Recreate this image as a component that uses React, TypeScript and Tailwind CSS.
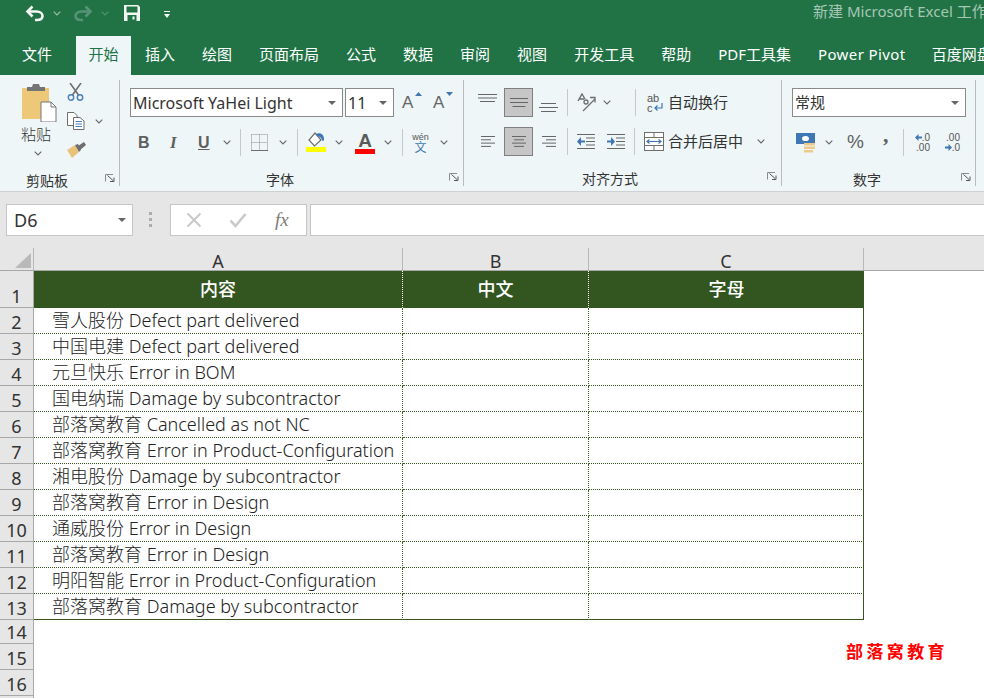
import React from "react";

const FONT = "font-['Noto_Sans','Noto_Sans_CJK_SC',sans-serif]";

function Chev({ className = "", color = "#666666" }: { className?: string; color?: string }) {
  return (
    <svg width="8" height="5" viewBox="0 0 8 5" className={"shrink-0 " + className}>
      <path d="M0.7 0.7 L4 4 L7.3 0.7" fill="none" stroke={color} strokeWidth="1.1" />
    </svg>
  );
}
function Tri({ className = "" }: { className?: string }) {
  return (
    <svg width="8" height="4" viewBox="0 0 8 4" className={"shrink-0 " + className}>
      <path d="M0 0 H8 L4 4 Z" fill="#666666" />
    </svg>
  );
}
function Launcher() {
  return (
    <svg width="10" height="8" viewBox="0 0 10 8" className="shrink-0">
      <path d="M0.5 7.5 V0.5 H8" fill="none" stroke="#8a8a8a" strokeWidth="1" />
      <path d="M2.5 1.5 L8 6.5 M9 3.5 V7.5 H5" fill="none" stroke="#555555" strokeWidth="1" />
    </svg>
  );
}
function VSep({ className = "" }: { className?: string }) {
  return <div className={"w-px h-[27px] bg-[#c6c9ca] shrink-0 " + className} />;
}
function Lines({ w, gap, widths, className = "" }: { w: number; gap: number; widths: number[]; className?: string }) {
  return (
    <svg width={w} height={(widths.length - 1) * gap + 1} className={"shrink-0 " + className}>
      {widths.map((lw, i) => (
        <rect key={i} x={(w - lw) / 2} y={i * gap} width={lw} height="1" fill="#666666" />
      ))}
    </svg>
  );
}
function LinesAligned({ align, className = "" }: { align: "l" | "c" | "r"; className?: string }) {
  const widths = [14, 10, 14, 10];
  return (
    <svg width="14" height="11" className={"shrink-0 " + className}>
      {widths.map((lw, i) => (
        <rect key={i} x={align === "l" ? 0 : align === "r" ? 14 - lw : (14 - lw) / 2} y={i * 3.3} width={lw} height="1" fill="#666666" />
      ))}
    </svg>
  );
}

function Undo() {
  return (
    <svg width="20" height="17" viewBox="0 0 20 17" className="shrink-0">
      <path d="M3 6.5 H11.5 C15 6.5 17.5 8.5 17.5 11 C17.5 13.8 15 15 12 15 H10" fill="none" stroke="#f4f8f5" strokeWidth="2.6" />
      <path d="M7.5 1.5 L2.5 6.5 L7.5 11.5" fill="none" stroke="#f4f8f5" strokeWidth="2.6" />
    </svg>
  );
}
function Redo() {
  return (
    <svg width="20" height="17" viewBox="0 0 20 17" className="shrink-0">
      <path d="M17 6.5 H8.5 C5 6.5 2.5 8.5 2.5 11 C2.5 13.8 5 15 8 15 H10" fill="none" stroke="#569377" strokeWidth="2.6" />
      <path d="M12.5 1.5 L17.5 6.5 L12.5 11.5" fill="none" stroke="#569377" strokeWidth="2.6" />
    </svg>
  );
}
function Save() {
  return (
    <svg width="16" height="16" viewBox="0 0 16 16" className="shrink-0">
      <path d="M0 0 H14 L16 2 V16 H0 Z" fill="#f4f8f5" />
      <rect x="2.5" y="1.5" width="11" height="6" fill="#217346" />
      <rect x="3.5" y="10" width="9" height="6" fill="#217346" />
      <rect x="8.5" y="11.5" width="2" height="3" fill="#f4f8f5" />
    </svg>
  );
}
function Customize() {
  return (
    <svg width="6" height="8" viewBox="0 0 6 8" className="shrink-0">
      <rect x="0" y="0" width="6" height="1" fill="#f4f8f5" />
      <path d="M0 3 H6 L3 7 Z" fill="#f4f8f5" />
    </svg>
  );
}
function Paste() {
  return (
    <svg width="35" height="38" viewBox="0 0 35 38" className="shrink-0">
      <path d="M0 4 H27 V35 H0 Z" fill="#ecc878" />
      <path d="M5 7 V3 H10 L11 0 H17 L18 3 H23 V7 Z" fill="#757575" />
      <path d="M19 18 H29 L34 23 V38 H19 Z" fill="#ffffff" stroke="#777777" strokeWidth="1" />
      <path d="M29 18 V23 H34" fill="none" stroke="#777777" strokeWidth="1" />
    </svg>
  );
}
function Scissors() {
  return (
    <svg width="17" height="18" viewBox="0 0 17 18" className="shrink-0">
      <path d="M3 0 L11.5 12 M14 0 L5.5 12" stroke="#6f6f6f" strokeWidth="1.6" fill="none" />
      <circle cx="4" cy="14.5" r="2.7" fill="none" stroke="#4a7fb8" strokeWidth="1.4" />
      <circle cx="13" cy="14.5" r="2.7" fill="none" stroke="#4a7fb8" strokeWidth="1.4" />
    </svg>
  );
}
function CopyIcon() {
  return (
    <svg width="18" height="18" viewBox="0 0 18 18" className="shrink-0">
      <path d="M0.5 0.5 H7 L10 3.5 V13.5 H0.5 Z" fill="#ffffff" stroke="#6e6e6e" />
      <path d="M6.5 5.5 H13 L17 9 V17.5 H6.5 Z" fill="#ffffff" stroke="#6e6e6e" />
      <path d="M8.5 9.5 H15 M8.5 12 H15 M8.5 14.5 H15" stroke="#4a7fb8" strokeWidth="1" />
    </svg>
  );
}
function Painter() {
  return (
    <svg width="19" height="16" viewBox="0 0 19 16" className="shrink-0">
      <path d="M0 8 L8 3 L12 10 L5 16 Z" fill="#e9c27a" />
      <path d="M8 3 L12 10 L14 8 L11 2 Z" fill="#6e6e6e" />
      <path d="M11 4 L17 0 L19 3 L13 8 Z" fill="#6e6e6e" />
    </svg>
  );
}
function Borders() {
  return (
    <svg width="17" height="17" viewBox="0 0 17 17" className="shrink-0">
      <path d="M0.5 0.5 H16.5 V16.5 M0.5 0.5 V16.5 M0.5 8.5 H16.5 M8.5 0.5 V16.5" fill="none" stroke="#8c8c8c" strokeWidth="1" strokeDasharray="1 1" />
      <rect x="0" y="16" width="17" height="1" fill="#6e6e6e" />
    </svg>
  );
}
function Fill() {
  return (
    <svg width="20" height="20" viewBox="0 0 20 20" className="shrink-0">
      <path d="M9 1 L15 8 L8.5 14 L3 8 Z" fill="#ffffff" stroke="#6e6e6e" strokeWidth="1.2" />
      <path d="M10 2 C15 0 18 3 18 7 C18 9 17 10 16 8 C15 5 13 4 11 4 Z" fill="#3f76b4" />
      <rect x="0" y="15" width="20" height="5" fill="#ffff00" />
    </svg>
  );
}
function Orientation() {
  return (
    <svg width="19" height="19" viewBox="0 0 19 19" className="shrink-0">
      <path d="M6 18 L18 6" stroke="#6e6e6e" strokeWidth="1.3" fill="none" />
      <path d="M13 4.5 H18 V9.5" stroke="#6e6e6e" strokeWidth="1.3" fill="none" />
      <path d="M1 8 L5 1 L8 6 M2.5 6 L7 6" stroke="#6e6e6e" strokeWidth="1.4" fill="none" />
      <circle cx="9" cy="9" r="2" fill="none" stroke="#6e6e6e" strokeWidth="1.3" />
    </svg>
  );
}
function Indent({ flip = false }: { flip?: boolean }) {
  return (
    <svg width="18" height="15" viewBox="0 0 18 15" className="shrink-0">
      <rect x="0" y="0" width="18" height="1" fill="#666666" />
      <rect x="0" y="14" width="18" height="1" fill="#666666" />
      {[3.5, 7, 10.5].map((y) => (
        <rect key={y} x="9" y={y} width="9" height="1" fill="#666666" />
      ))}
      {flip ? (
        <path d="M0 6.5 H4 V3 L8 7.5 L4 12 V8.5 H0 Z" fill="#3f76b4" />
      ) : (
        <path d="M8 6.5 H4 V3 L0 7.5 L4 12 V8.5 H8 Z" fill="#3f76b4" />
      )}
    </svg>
  );
}
function WrapIcon() {
  return (
    <div className="w-[17px] h-[20px] shrink-0 flex flex-col font-['Liberation_Sans',sans-serif] text-[11px] leading-[10px] text-[#555555]">
      <span>ab</span>
      <div className="flex items-center">
        <span>c</span>
        <svg width="10" height="9" viewBox="0 0 10 9" className="shrink-0">
          <path d="M9 0 V5 H2 M4.5 2.5 L2 5 L4.5 7.5" fill="none" stroke="#3f76b4" strokeWidth="1.2" />
        </svg>
      </div>
    </div>
  );
}
function MergeIcon() {
  return (
    <svg width="20" height="19" viewBox="0 0 20 19" className="shrink-0">
      <rect x="0.5" y="0.5" width="19" height="18" fill="#ffffff" stroke="#6e6e6e" />
      <path d="M0.5 5.5 H19.5 M0.5 13.5 H19.5 M10 0.5 V5.5 M10 13.5 V18.5" stroke="#6e6e6e" fill="none" />
      <path d="M3 9.5 H17 M5.5 7.5 L3 9.5 L5.5 11.5 M14.5 7.5 L17 9.5 L14.5 11.5" stroke="#3f76b4" strokeWidth="1.2" fill="none" />
    </svg>
  );
}
function Accounting() {
  return (
    <svg width="20" height="20" viewBox="0 0 20 20" className="shrink-0">
      <rect x="0" y="0" width="19" height="11" fill="#3f76b4" />
      <ellipse cx="9.5" cy="5.5" rx="3.5" ry="2.6" fill="#ffffff" />
      <rect x="8" y="10" width="11" height="2.5" fill="#edc98a" />
      <rect x="8" y="13.5" width="11" height="2.5" fill="#edc98a" />
      <rect x="8" y="17" width="9" height="2.5" fill="#edc98a" />
    </svg>
  );
}
function Decimal({ inc }: { inc: boolean }) {
  const arrow = (
    <svg width="7" height="7" viewBox="0 0 7 7" className="shrink-0">
      {inc ? <path d="M7 2.5 H3.5 V0 L0 3.5 L3.5 7 V4.5 H7 Z" fill="#3f76b4" /> : <path d="M0 2.5 H3.5 V0 L7 3.5 L3.5 7 V4.5 H0 Z" fill="#3f76b4" />}
    </svg>
  );
  return (
    <div className="flex flex-col w-[16px] shrink-0 font-['Liberation_Sans',sans-serif] text-[10px] leading-[9px] text-[#555555]">
      <div className="flex items-center justify-end h-[9px]">
        {inc ? arrow : null}
        <span>{inc ? ".0" : ".00"}</span>
      </div>
      <div className="flex items-center justify-end h-[9px] mt-[1px]">
        {inc ? null : arrow}
        <span>{inc ? ".00" : ".0"}</span>
      </div>
    </div>
  );
}

function Group({ width, label, labelPad, children }: { width: number; label: string; labelPad: number; children: React.ReactNode }) {
  return (
    <div style={{ width }} className="shrink-0 h-[106px] flex flex-col border-r border-r-[#b9bcbd]">
      <div className="h-[89px]">{children}</div>
      <div className="flex-1 flex items-center justify-between pr-[4px]">
        <span style={{ paddingLeft: labelPad }} className="text-[14px] leading-[20px] text-[#333333] mt-[13px]">{label}</span>
        <span className="mt-[7px]"><Launcher /></span>
      </div>
    </div>
  );
}

function SelectBox({ text, width, size = "text-[15px]" }: { text: string; width: number; size?: string }) {
  return (
    <div style={{ width }} className={"h-[29px] bg-white border border-[#8a8a8a] flex items-center justify-between pl-[2px] pr-[6px] shrink-0 text-[#333333] " + size}>
      <span className="whitespace-nowrap">{text}</span>
      <Tri />
    </div>
  );
}

const tabs: [string, number][] = [
  ["插入", 14],
  ["绘图", 27],
  ["页面布局", 27],
  ["公式", 27],
  ["数据", 27],
  ["审阅", 27],
  ["视图", 27],
  ["开发工具", 27],
  ["帮助", 27],
  ["PDF工具集", 27],
  ["Power Pivot", 27],
  ["百度网盘", 26],
];

const rows = [
  "雪人股份 Defect part delivered",
  "中国电建 Defect part delivered",
  "元旦快乐 Error in BOM",
  "国电纳瑞 Damage by subcontractor",
  "部落窝教育 Cancelled as not NC",
  "部落窝教育 Error in Product-Configuration",
  "湘电股份 Damage by subcontractor",
  "部落窝教育 Error in Design",
  "通威股份 Error in Design",
  "部落窝教育 Error in Design",
  "明阳智能 Error in Product-Configuration",
  "部落窝教育 Damage by subcontractor",
];

function RowNum({ n, h }: { n: number; h: number }) {
  return (
    <div style={{ height: h }} className="w-[34px] shrink-0 bg-[#e6e6e6] border-r border-r-[#a8a8a8] border-b border-b-[#a8a8a8] flex items-end justify-center text-[18px] leading-[22px] text-[#333333]">
      {n}
    </div>
  );
}

export default function App() {
  return (
    <div className={"w-[984px] h-[698px] overflow-hidden flex flex-col bg-white " + FONT}>
      {/* title bar */}
      <div className="h-[75px] shrink-0 bg-[#217346] flex flex-col overflow-hidden">
        <div className="h-[36px] flex items-start pt-[5px] pl-[25px] overflow-hidden">
          <Undo />
          <Chev className="ml-[8px] mt-[6px]" color="#9cc0ad" />
          <span className="ml-[12px] shrink-0"><Redo /></span>
          <Chev className="ml-[8px] mt-[6px]" color="#569377" />
          <span className="ml-[15px] shrink-0"><Save /></span>
          <span className="ml-[24px] mt-[6px] shrink-0"><Customize /></span>
          <span className="ml-[643px] -mt-[1px] shrink-0 whitespace-nowrap text-[15px] leading-[14px] h-[16px] text-[#a6c7b5]">新建 Microsoft Excel 工作簿</span>
        </div>
        <div className="h-[39px] flex items-stretch whitespace-nowrap text-[15px] text-white">
          <div className="shrink-0 pl-[22px] pt-[6px] pr-[24px] leading-[24px]">文件</div>
          <div className="shrink-0 w-[55px] bg-[#eef6f7] text-[#217346] text-center pt-[6px] leading-[24px]">开始</div>
          {tabs.map(([t, ml]) => (
            <div key={t} style={{ marginLeft: ml }} className={"shrink-0 pt-[6px] leading-[24px] " + (t === "Power Pivot" ? "tracking-[0.4px]" : "")}>{t}</div>
          ))}
        </div>
      </div>

      {/* ribbon */}
      <div className="h-[117px] shrink-0 bg-[#eef6f7] border-b border-b-[#d0d2d2] pt-[5px] flex">
        <Group width={120} label="剪贴板" labelPad={26}>
          <div className="flex">
            <div className="flex flex-col items-start w-[67px] pt-[4px]">
              <span className="ml-[22px]"><Paste /></span>
              <span className="ml-[21px] text-[15px] leading-[20px] font-light text-[#333333] mt-[2px]">粘贴</span>
              <Chev className="ml-[34px] mt-[7px]" />
            </div>
            <div className="flex flex-col pt-[3px]">
              <Scissors />
              <div className="flex items-center mt-[11px]">
                <CopyIcon />
                <Chev className="ml-[10px]" />
              </div>
              <div className="mt-[12px]"><Painter /></div>
            </div>
          </div>
        </Group>

        <Group width={344} label="字体" labelPad={146}>
          <div className="flex items-center pl-[10px] pt-[8px]">
            <SelectBox text="Microsoft YaHei Light" width={213} size="text-[16px]" />
            <div className="ml-[2px]"><SelectBox text="11" width={49} size="text-[16px]" /></div>
            <div className="ml-[8px] w-[18px] relative text-[17px] leading-[20px] text-[#666666] font-['Liberation_Sans',sans-serif]">
              A
              <svg width="7" height="4" className="absolute right-[-2px] top-[-1px]"><path d="M0 4 L3.5 0 L7 4 Z" fill="#3f76b4" /></svg>
            </div>
            <div className="ml-[13px] w-[18px] relative text-[17px] leading-[20px] text-[#666666] font-['Liberation_Sans',sans-serif]">
              A
              <svg width="7" height="4" className="absolute right-[-2px] top-[-1px]"><path d="M0 0 H7 L3.5 4 Z" fill="#3f76b4" /></svg>
            </div>
          </div>
          <div className="flex items-center pl-[18px] mt-[11px] h-[29px]">
            <span className="w-[10px] text-[16px] font-bold text-[#5f5f5f] font-['Liberation_Sans',sans-serif]">B</span>
            <span className="ml-[22px] w-[10px] text-[17px] font-bold italic text-[#5f5f5f] font-['Liberation_Serif',serif]">I</span>
            <span className="ml-[18px] w-[12px] text-[16px] font-bold underline text-[#5f5f5f] font-['Liberation_Sans',sans-serif]">U</span>
            <Chev className="ml-[13px]" />
            <VSep className="ml-[9px]" />
            <span className="ml-[10px]"><Borders /></span>
            <Chev className="ml-[11px]" />
            <VSep className="ml-[10px]" />
            <span className="ml-[8px] -mt-[1px]"><Fill /></span>
            <Chev className="ml-[9px]" />
            <div className="ml-[12px] w-[20px] flex flex-col items-center mt-[1px]">
              <span className="text-[19px] leading-[17px] font-bold text-[#5a5a5a] font-['Liberation_Sans',sans-serif]">A</span>
              <div className="w-[20px] h-[5px] bg-[#ff0000]" />
            </div>
            <Chev className="ml-[9px]" />
            <VSep className="ml-[10px]" />
            <div className="ml-[9px] w-[17px] flex flex-col items-center">
              <span className="text-[9px] leading-[10px] text-[#555555] font-['Liberation_Sans',sans-serif]">wén</span>
              <span className="text-[12px] leading-[12px] text-[#3f76b4]">文</span>
            </div>
            <Chev className="ml-[11px]" />
          </div>
        </Group>

        <Group width={318} label="对齐方式" labelPad={118}>
          <div className="flex items-center pl-[14px] pt-[8px] h-[37px]">
            <Lines w={19} gap={3.5} widths={[19, 19, 15]} className="-mt-[10px]" />
            <div className="ml-[7px] w-[29px] h-[29px] bg-[#c6c6c6] border border-[#7f7f7f] flex items-center justify-center">
              <Lines w={18} gap={4} widths={[18, 18, 13]} />
            </div>
            <Lines w={19} gap={4} widths={[15, 19, 15]} className="ml-[6px] mt-[10px]" />
            <VSep className="ml-[9px]" />
            <span className="ml-[9px]"><Orientation /></span>
            <Chev className="ml-[7px]" />
            <VSep className="ml-[24px]" />
            <span className="ml-[11px]"><WrapIcon /></span>
            <span className="ml-[4px] text-[15px] text-[#333333] whitespace-nowrap">自动换行</span>
          </div>
          <div className="flex items-center pl-[17px] mt-[10px] h-[29px]">
            <LinesAligned align="l" />
            <div className="ml-[9px] w-[29px] h-[29px] bg-[#c6c6c6] border border-[#7f7f7f] flex items-center justify-center">
              <LinesAligned align="c" />
            </div>
            <LinesAligned align="r" className="ml-[9px]" />
            <VSep className="ml-[11px]" />
            <span className="ml-[9px]"><Indent /></span>
            <span className="ml-[12px]"><Indent flip /></span>
            <VSep className="ml-[9px]" />
            <span className="ml-[9px]"><MergeIcon /></span>
            <span className="ml-[4px] text-[15px] text-[#333333] whitespace-nowrap">合并后居中</span>
            <Chev className="ml-[14px]" />
          </div>
        </Group>

        <Group width={194} label="数字" labelPad={71}>
          <div className="pl-[10px] pt-[8px]">
            <SelectBox text="常规" width={174} />
          </div>
          <div className="flex items-center pl-[14px] mt-[11px] h-[29px]">
            <Accounting />
            <Chev className="ml-[9px]" />
            <span className="ml-[14px] text-[19px] w-[17px] text-[#5f5f5f] font-['Liberation_Sans',sans-serif]">%</span>
            <span className="ml-[19px] -mt-[16px] w-[6px] text-[22px] leading-[20px] font-bold text-[#5f5f5f] font-['Liberation_Serif',serif]">,</span>
            <VSep className="ml-[14px]" />
            <span className="ml-[10px]"><Decimal inc /></span>
            <span className="ml-[14px]"><Decimal inc={false} /></span>
          </div>
        </Group>
      </div>

      {/* formula bar */}
      <div className="h-[56px] shrink-0 bg-[#e6e6e6] flex items-start pt-[12px] pl-[6px]">
        <div className="w-[127px] h-[32px] bg-white border border-[#c6c6c6] flex items-center justify-between pl-[7px] pr-[6px] text-[18px] text-[#333333]">
          <span>D6</span>
          <Tri />
        </div>
        <svg width="4" height="16" className="ml-[16px] mt-[8px] shrink-0">
          <rect width="3" height="3" y="0" fill="#adadad" />
          <rect width="3" height="3" y="6" fill="#adadad" />
          <rect width="3" height="3" y="12" fill="#adadad" />
        </svg>
        <div className="ml-[17px] w-[137px] h-[32px] bg-white border border-[#c6c6c6] flex items-center pl-[15px]">
          <svg width="16" height="16" viewBox="0 0 16 16" className="shrink-0">
            <path d="M1.5 1.5 L14.5 14.5 M14.5 1.5 L1.5 14.5" stroke="#c9c9c9" strokeWidth="2" />
          </svg>
          <svg width="18" height="16" viewBox="0 0 18 16" className="ml-[27px] shrink-0">
            <path d="M1.5 8.5 L6.5 14 L16.5 2" fill="none" stroke="#c9c9c9" strokeWidth="2.6" />
          </svg>
          <span className="ml-[28px] text-[19px] italic text-[#7a7a7a] font-['Liberation_Serif',serif]">fx</span>
        </div>
        <div className="ml-[3px] flex-1 h-[32px] bg-white border border-[#c6c6c6] border-r-0" />
      </div>

      {/* sheet */}
      <div className="flex-1 relative bg-white overflow-hidden">
        <div className="flex h-[23px] bg-[#e6e6e6] border-b border-b-[#a8a8a8] text-[18px] leading-[26px] text-[#333333]">
          <div className="w-[34px] shrink-0 border-r border-r-[#b8b8b8] flex justify-end items-end pr-[2px] pb-[2px]">
            <svg width="16" height="15" className="shrink-0"><path d="M16 0 V15 H0 Z" fill="#b9b9b9" /></svg>
          </div>
          <div className="w-[369px] shrink-0 border-r border-r-[#b8b8b8] text-center">A</div>
          <div className="w-[186px] shrink-0 border-r border-r-[#b8b8b8] text-center">B</div>
          <div className="w-[275px] shrink-0 border-r border-r-[#b8b8b8] text-center">C</div>
        </div>

        <div className="flex">
          <RowNum n={1} h={37} />
          <div className="w-[369px] h-[37px] shrink-0 bg-[#335621] border-r border-dotted border-r-white text-white text-[18px] font-medium flex items-center justify-center pb-[1px]">内容</div>
          <div className="w-[186px] h-[37px] shrink-0 bg-[#335621] border-r border-dotted border-r-white text-white text-[18px] font-medium flex items-center justify-center pb-[1px]">中文</div>
          <div className="w-[275px] h-[37px] shrink-0 bg-[#335621] text-white text-[18px] font-medium flex items-center justify-center pb-[1px]">字母</div>
        </div>

        {rows.map((t, i) => {
          const last = i === rows.length - 1;
          const bottom = last ? "border-b border-b-[#375623]" : "border-b border-dotted border-b-[#375623]";
          return (
            <div key={i} className="flex">
              <RowNum n={i + 2} h={26} />
              <div className={"w-[369px] h-[26px] shrink-0 border-r border-r-[#2f6b12] pl-[18px] text-[18px] leading-[25px] font-light text-[#222222] whitespace-nowrap " + bottom} style={{ borderRightStyle: "dotted" }}>{t}</div>
              <div className={"w-[186px] h-[26px] shrink-0 border-r border-r-[#2f6b12] " + bottom} style={{ borderRightStyle: "dotted" }} />
              <div className={"w-[275px] h-[26px] shrink-0 border-r border-r-[#375623] " + bottom} style={{ borderRightStyle: "solid" }} />
            </div>
          );
        })}
        <RowNum n={14} h={24} />
        <RowNum n={15} h={26} />
        <RowNum n={16} h={26} />
        <div className="w-[34px] h-[10px] bg-[#e6e6e6] border-r border-r-[#a8a8a8]" />

        <div className="absolute left-[846px] top-[394px] text-[17px] leading-[20px] font-bold tracking-[3.4px] text-[#ff0000] whitespace-nowrap">部落窝教育</div>
      </div>
    </div>
  );
}
